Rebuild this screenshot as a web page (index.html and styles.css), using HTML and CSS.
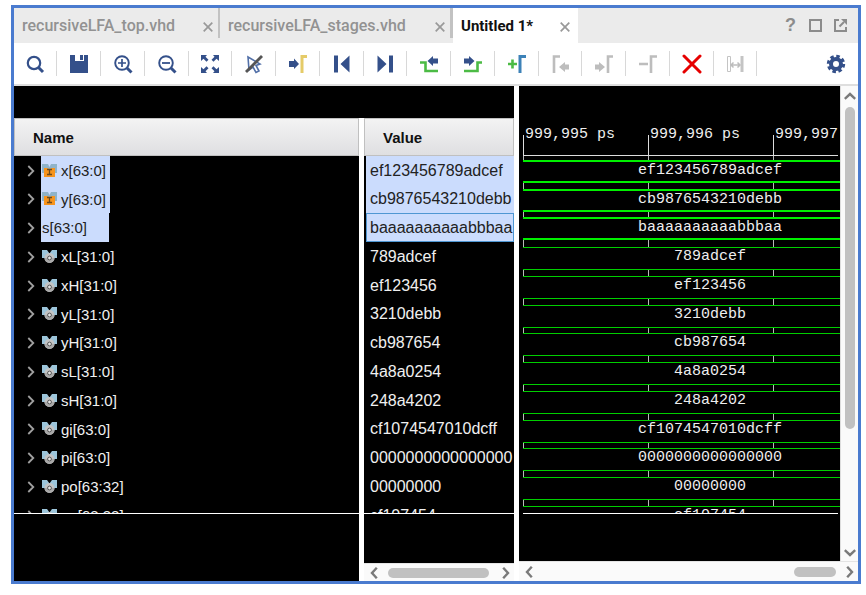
FILE: index.html
```html
<!DOCTYPE html>
<html lang="en">
<head>
<meta charset="utf-8">
<title>Waveform viewer</title>
<link rel="stylesheet" href="styles.css">
</head>
<body>
<svg class="defs" aria-hidden="true">
  <symbol id="close" viewBox="0 0 10 10"><path d="M.7.7l8.6 8.6M9.300.7L.7 9.300" stroke="currentColor" stroke-width="1.700" fill="none"/></symbol>
  <symbol id="chevron" viewBox="0 0 8 12"><path d="M1.300 1l5 5-5 5" stroke="currentColor" stroke-width="1.800" fill="none"/></symbol>
  <symbol id="arrow" viewBox="0 0 8 12"><path d="M1.200.8l4.800 5.200-4.800 5.200" stroke="currentColor" stroke-width="2.400" fill="none"/></symbol>
  <symbol id="input" viewBox="0 0 15 14"><path d="M0 0h6l1.500 3L9 0h6v9H0z" fill="#8fb3c9"/><path d="M2 4h3l2 1h1l2-1h3v9H2z" fill="#f7941d"/><path d="M5 5.500h5M5 10.500h5M7.500 5.500v5" stroke="#6b4a1c" stroke-width="1.300"/></symbol>
  <symbol id="bus" viewBox="0 0 15 14"><path d="M0 0h5l2.500 3.500L10 0h5v8H0z" fill="#9cc5da"/><circle cx="7.500" cy="8" r="5" fill="#c4c4c4"/><path d="M2.500 8a5 5 0 0 0 10 0" fill="#a9a9a9"/><circle cx="7.500" cy="8" r="1.900" fill="#e6e6e6" stroke="#555"/></symbol>
</svg>
<main class="window">
  <header class="tabbar">
    <nav class="tabs">
      <div class="tab tab-top"><a href="#">recursiveLFA_top.vhd</a><button aria-label="Close"><svg width="10" height="10"><use href="#close"/></svg></button></div>
      <div class="tab tab-stages"><a href="#">recursiveLFA_stages.vhd</a><button aria-label="Close"><svg width="10" height="10"><use href="#close"/></svg></button></div>
      <div class="tab tab-active"><a href="#">Untitled 1*</a><button aria-label="Close"><svg width="10" height="10"><use href="#close"/></svg></button></div>
    </nav>
    <div class="window-actions">
      <button aria-label="Help" class="help">?</button>
      <button aria-label="Maximize"><svg width="13" height="13" viewBox="0 0 13 13"><rect x="1" y="1" width="11" height="11" fill="none" stroke="#8c8c8c" stroke-width="2"/></svg></button>
      <button aria-label="Float"><svg width="13" height="13" viewBox="0 0 13 13"><path d="M5 1H1v11h11V8" fill="none" stroke="#8c8c8c" stroke-width="2"/><path d="M5.500 7.500L10 3" stroke="#8c8c8c" stroke-width="2"/><path d="M7 0h6v6z" fill="#8c8c8c"/></svg></button>
    </div>
  </header>

  <div class="toolbar">
    <div class="tools">
      <button aria-label="Find"><svg viewBox="0 0 20 20"><circle cx="9" cy="9" r="6.200" fill="none" stroke="#34508a" stroke-width="2.200"/><path d="M13.500 13.500l4.500 4.500" stroke="#34508a" stroke-width="3"/></svg></button>
      <button aria-label="Save"><svg viewBox="0 0 20 20"><path d="M1 1h5v6h9V1h4v18H1z" fill="#34508a"/><path d="M11 1h3v5h-3z" fill="#34508a"/></svg></button>
      <button aria-label="Zoom in"><svg viewBox="0 0 20 20"><circle cx="9" cy="9" r="6.800" fill="none" stroke="#34508a" stroke-width="1.900"/><path d="M5 9h8M9 5v8" stroke="#34508a" stroke-width="1.700"/><path d="M14 14l4.500 4.500" stroke="#34508a" stroke-width="3"/></svg></button>
      <button aria-label="Zoom out"><svg viewBox="0 0 20 20"><circle cx="9" cy="9" r="6.800" fill="none" stroke="#34508a" stroke-width="1.900"/><path d="M5 9h8" stroke="#34508a" stroke-width="1.800"/><path d="M14 14l4.500 4.500" stroke="#34508a" stroke-width="3"/></svg></button>
      <button aria-label="Zoom fit"><svg viewBox="0 0 20 20"><path d="M1 1h6L5.500 2.700l3 3-2 2-3-3L1 7zM19 1v6l-2.500-2.300-3 3-2-2 3-3L13 1zM1 19v-6l2.500 2.300 3-3 2 2-3 3L7 19zM19 19h-6l1.500-1.700-3-3 2-2 3 3L19 13z" fill="#34508a"/></svg></button>
      <button aria-label="Zoom to cursor"><svg viewBox="0 0 20 20"><path d="M4 3l12 7-4 1.500 3 5.500-3 1.500-3-5.500-4 3z" fill="#fff" stroke="#5270a8" stroke-width="1.600"/><path d="M2 18L18 2" stroke="#555" stroke-width="2.800"/></svg></button>
      <button aria-label="Go to cursor"><svg viewBox="0 0 20 20"><path d="M1 7h5V4.500l5 5.500-5 5V13H1z" fill="#34508a"/><path d="M19 2.500h-5V19" fill="none" stroke="#e5cb68" stroke-width="3"/></svg></button>
      <button aria-label="Go to start"><svg viewBox="0 0 20 20"><path d="M2 1.500h4v17H2zM17.500 1.500v17L8.500 10z" fill="#34508a"/></svg></button>
      <button aria-label="Go to end"><svg viewBox="0 0 20 20"><path d="M14 1.500h4v17h-4zM2.500 1.500v17l9-8.500z" fill="#34508a"/></svg></button>
      <button aria-label="Previous transition"><svg viewBox="0 0 20 20"><path d="M1 8.500h5.500v8.500H19" fill="none" stroke="#4cbb45" stroke-width="2.600"/><path d="M19 4.500h-5V2L8.500 7l5.500 5V9.500h5z" fill="#34508a"/></svg></button>
      <button aria-label="Next transition"><svg viewBox="0 0 20 20"><path d="M19 8.500h-4.500v8.500H1" fill="none" stroke="#4cbb45" stroke-width="2.600"/><path d="M1 4.500h5V2l5.500 5L6 12V9.500H1z" fill="#34508a"/></svg></button>
      <button aria-label="Add marker"><svg viewBox="0 0 20 20"><path d="M1 10h9M5.500 5.500v9" stroke="#4cbb45" stroke-width="2.600"/><path d="M19 2.500h-6V19" fill="none" stroke="#3d82b8" stroke-width="3"/></svg></button>
      <button aria-label="Previous marker" disabled><svg viewBox="0 0 20 20"><path d="M10 2.500H4V19" fill="none" stroke="#bdbdbd" stroke-width="2.600"/><path d="M19 10.500h-4V8l-6 5 6 5v-2.500h4z" fill="#bdbdbd"/></svg></button>
      <button aria-label="Next marker" disabled><svg viewBox="0 0 20 20"><path d="M19 2.500h-5V19" fill="none" stroke="#bdbdbd" stroke-width="2.600"/><path d="M1 10.500h4V8l6 5-6 5v-2.500H1z" fill="#bdbdbd"/></svg></button>
      <button aria-label="Delete marker" disabled><svg viewBox="0 0 20 20"><path d="M1 10h9M19 2.500h-6V19" fill="none" stroke="#bdbdbd" stroke-width="2.600"/></svg></button>
      <button aria-label="Delete all"><svg viewBox="0 0 20 20"><path d="M2 2l16 16M18 2L2 18" stroke="#e60000" stroke-width="3" stroke-linecap="round"/></svg></button>
      <button aria-label="Swap cursors" disabled><svg viewBox="0 0 20 20"><path d="M2.500 2.500h3v15h-3z" fill="none" stroke="#c4c4c4"/><path d="M15.500 2h3v16h-3z" fill="#c4c4c4"/><path d="M6 11h9M8.500 8.500L6 11l2.500 2.500M12.500 8.500L15 11l-2.500 2.500" fill="none" stroke="#bdbdbd" stroke-width="1.500"/></svg></button>
    </div>
    <button class="settings" aria-label="Settings"><svg viewBox="0 0 20 20"><circle cx="10" cy="10" r="7.700" fill="none" stroke="#34508a" stroke-width="3" stroke-dasharray="3.500 2.550"/><circle cx="10" cy="10" r="5" fill="none" stroke="#34508a" stroke-width="4"/></svg></button>
  </div>

  <div class="workspace">
    <section class="signals">
      <div class="strip"></div>
      <div class="columns">
        <div class="pane">
          <div class="clip">
            <table>
              <thead><tr><th scope="col">Name</th></tr></thead>
              <tbody class="names">
                <tr><td><div class="name"><button aria-label="Expand"><svg width="8" height="12"><use href="#chevron"/></svg></button><span class="label picked"><svg width="15" height="14"><use href="#input"/></svg>x[63:0]</span></div></td></tr>
                <tr><td><div class="name"><button aria-label="Expand"><svg width="8" height="12"><use href="#chevron"/></svg></button><span class="label picked"><svg width="15" height="14"><use href="#input"/></svg>y[63:0]</span></div></td></tr>
                <tr><td><div class="name"><button aria-label="Expand"><svg width="8" height="12"><use href="#chevron"/></svg></button><span class="label picked plain">s[63:0]</span></div></td></tr>
                <tr><td><div class="name"><button aria-label="Expand"><svg width="8" height="12"><use href="#chevron"/></svg></button><span class="label"><svg width="15" height="14"><use href="#bus"/></svg>xL[31:0]</span></div></td></tr>
                <tr><td><div class="name"><button aria-label="Expand"><svg width="8" height="12"><use href="#chevron"/></svg></button><span class="label"><svg width="15" height="14"><use href="#bus"/></svg>xH[31:0]</span></div></td></tr>
                <tr><td><div class="name"><button aria-label="Expand"><svg width="8" height="12"><use href="#chevron"/></svg></button><span class="label"><svg width="15" height="14"><use href="#bus"/></svg>yL[31:0]</span></div></td></tr>
                <tr><td><div class="name"><button aria-label="Expand"><svg width="8" height="12"><use href="#chevron"/></svg></button><span class="label"><svg width="15" height="14"><use href="#bus"/></svg>yH[31:0]</span></div></td></tr>
                <tr><td><div class="name"><button aria-label="Expand"><svg width="8" height="12"><use href="#chevron"/></svg></button><span class="label"><svg width="15" height="14"><use href="#bus"/></svg>sL[31:0]</span></div></td></tr>
                <tr><td><div class="name"><button aria-label="Expand"><svg width="8" height="12"><use href="#chevron"/></svg></button><span class="label"><svg width="15" height="14"><use href="#bus"/></svg>sH[31:0]</span></div></td></tr>
                <tr><td><div class="name"><button aria-label="Expand"><svg width="8" height="12"><use href="#chevron"/></svg></button><span class="label"><svg width="15" height="14"><use href="#bus"/></svg>gi[63:0]</span></div></td></tr>
                <tr><td><div class="name"><button aria-label="Expand"><svg width="8" height="12"><use href="#chevron"/></svg></button><span class="label"><svg width="15" height="14"><use href="#bus"/></svg>pi[63:0]</span></div></td></tr>
                <tr><td><div class="name"><button aria-label="Expand"><svg width="8" height="12"><use href="#chevron"/></svg></button><span class="label"><svg width="15" height="14"><use href="#bus"/></svg>po[63:32]</span></div></td></tr>
                <tr><td><div class="name"><button aria-label="Expand"><svg width="8" height="12"><use href="#chevron"/></svg></button><span class="label"><svg width="15" height="14"><use href="#bus"/></svg>go[63:32]</span></div></td></tr>
              </tbody>
            </table>
          </div>
          <div class="foot"></div>
        </div>
        <div class="pane">
          <div class="clip">
            <table>
              <thead><tr><th scope="col">Value</th></tr></thead>
              <tbody class="values">
                <tr><td><div class="value picked">ef123456789adcef</div></td></tr>
                <tr><td><div class="value picked">cb9876543210debb</div></td></tr>
                <tr><td><div class="value picked focused">baaaaaaaaaabbbaa</div></td></tr>
                <tr><td><div class="value">789adcef</div></td></tr>
                <tr><td><div class="value">ef123456</div></td></tr>
                <tr><td><div class="value">3210debb</div></td></tr>
                <tr><td><div class="value">cb987654</div></td></tr>
                <tr><td><div class="value">4a8a0254</div></td></tr>
                <tr><td><div class="value">248a4202</div></td></tr>
                <tr><td><div class="value">cf1074547010dcff</div></td></tr>
                <tr><td><div class="value">0000000000000000</div></td></tr>
                <tr><td><div class="value">00000000</div></td></tr>
                <tr><td><div class="value">cf107454</div></td></tr>
              </tbody>
            </table>
          </div>
          <div class="foot">
            <div class="hscroll value-scroll"><button class="back" aria-label="Scroll left"><svg width="8" height="12"><use href="#arrow"/></svg></button><span class="thumb"></span><button aria-label="Scroll right"><svg width="8" height="12"><use href="#arrow"/></svg></button></div>
          </div>
        </div>
      </div>
    </section>

    <section class="waves">
      <div class="wave-main">
        <div class="wave-view">
          <div class="ruler"><span>999,995 ps</span><span>999,996 ps</span><span>999,997</span></div>
          <div class="wave-list">
            <div class="wave strong"><div class="body">ef123456789adcef</div></div>
            <div class="wave strong"><div class="body">cb9876543210debb</div></div>
            <div class="wave strong"><div class="body">baaaaaaaaaabbbaa</div></div>
            <div class="wave"><div class="body">789adcef</div></div>
            <div class="wave"><div class="body">ef123456</div></div>
            <div class="wave"><div class="body">3210debb</div></div>
            <div class="wave"><div class="body">cb987654</div></div>
            <div class="wave"><div class="body">4a8a0254</div></div>
            <div class="wave"><div class="body">248a4202</div></div>
            <div class="wave"><div class="body">cf1074547010dcff</div></div>
            <div class="wave"><div class="body">0000000000000000</div></div>
            <div class="wave"><div class="body">00000000</div></div>
            <div class="wave"><div class="body">cf107454</div></div>
          </div>
          <div class="wave-foot"></div>
        </div>
        <div class="vscroll"><button class="up" aria-label="Scroll up"><svg width="8" height="12"><use href="#arrow"/></svg></button><span class="thumb"></span><button class="down" aria-label="Scroll down"><svg width="8" height="12"><use href="#arrow"/></svg></button></div>
      </div>
      <div class="hscroll wave-scroll"><button class="back" aria-label="Scroll left"><svg width="8" height="12"><use href="#arrow"/></svg></button><span class="thumb"></span><button aria-label="Scroll right"><svg width="8" height="12"><use href="#arrow"/></svg></button></div>
    </section>
  </div>
</main>
</body>
</html>
```
FILE: styles.css
```css
* { box-sizing: border-box; }

body {
  margin: 0;
  height: 100vh;
  padding: 5px 5px 11px 11px;
  background: #fff;
  font: 15px "Liberation Sans", Arial, sans-serif;
  color: #000;
}

.defs { display: none; }

button {
  display: flex;
  align-items: center;
  justify-content: center;
  margin: 0;
  padding: 0;
  border: 0;
  background: none;
  color: inherit;
}

.window {
  display: flex;
  flex-direction: column;
  height: 100%;
  border: 3px solid #4a7bcf;
}

/* Tabs */
.tabbar {
  display: flex;
  flex: none;
  justify-content: space-between;
  height: 35px;
  background: #ebebeb;
}

.tabs { display: flex; }

.tab {
  display: flex;
  align-items: center;
  justify-content: space-between;
  height: 30px;
  padding-left: 8px;
  border-right: 2px solid #c2c2c2;
  font: 500 16px Roboto, sans-serif;
  color: #929292;
}

.tab a {
  padding-top: 5px;
  color: inherit;
  text-decoration: none;
}

.tab button {
  width: 20px;
  height: 20px;
  margin-top: 8px;
  color: #999;
}

.tab-top { width: 206px; }

.tab-stages {
  width: 233px;
  border-right-width: 3px;
}

.tab-active {
  width: 125px;
  height: 35px;
  padding-right: 3px;
  padding-bottom: 5px;
  border-right: 0;
  background: #fff;
  font-weight: 700;
  font-size: 15px;
  color: #111;
}

.window-actions {
  display: flex;
  padding-right: 5px;
}

.window-actions button { width: 25px; }

.window-actions .help {
  font: 700 18px "Liberation Sans", Arial, sans-serif;
  color: #8c8c8c;
}

/* Toolbar */
.toolbar {
  display: flex;
  flex: none;
  align-items: center;
  justify-content: space-between;
  height: 43px;
  border-bottom: 2px solid #dedede;
}

.tools { display: flex; }

.tools button {
  width: 44px;
  height: 25px;
  border-right: 1px solid #d8d8d8;
}

.tools button:nth-child(4n+1) { width: 43px; }

.toolbar svg {
  width: 20px;
  height: 20px;
}

.settings { width: 44px; }

/* Workspace */
.workspace {
  display: grid;
  flex: 1;
  grid-template-columns: 500px minmax(0, 1fr);
  gap: 5px;
  min-height: 0;
}

.signals {
  display: flex;
  flex-direction: column;
  min-height: 0;
}

.strip {
  flex: none;
  height: 32px;
  background: #000;
}

.columns {
  display: grid;
  flex: 1;
  grid-template-columns: minmax(0, 1fr) 150px;
  grid-template-rows: minmax(0, 1fr);
  gap: 5px;
  min-height: 0;
}

.pane {
  display: flex;
  flex-direction: column;
  min-height: 0;
  background: #000;
  color: #f0f0f0;
}

.clip {
  flex: 1;
  min-height: 0;
  overflow: hidden;
}

table {
  width: 100%;
  border-spacing: 0;
}

th {
  height: 38px;
  padding: 0 18px;
  border: 1px solid #c0c0c0;
  background: linear-gradient(#f3f3f3, #dfdfe1);
  color: #111;
  text-align: left;
}

td { padding: 0; }

.name,
.value,
.wave { height: 29px; }

tr:nth-child(4n+2) .name,
tr:nth-child(4n+2) .value,
.wave:nth-child(4n+2) { height: 28px; }

.name {
  display: flex;
  align-items: stretch;
}

.name button {
  width: 27px;
  padding-left: 6px;
  color: #a0a0a0;
}

.label {
  display: flex;
  align-items: center;
  gap: 4px;
  padding: 0 4px 0 1px;
}

.label.plain { padding-right: 22px; }

.picked {
  background: #cbdcfd;
  color: #222;
}

.value {
  display: flex;
  align-items: center;
  margin-left: 2px;
  padding-left: 4px;
  font-size: 16px;
}

.focused {
  padding-left: 3px;
  border: 1px solid #4f97d3;
}

.foot {
  display: flex;
  flex: none;
  flex-direction: column;
  justify-content: flex-end;
  height: 68px;
  border-top: 1px solid #fff;
}

/* Waveforms */
.waves {
  display: flex;
  flex-direction: column;
  min-height: 0;
}

.wave-main {
  display: flex;
  flex: 1;
  min-height: 0;
}

.wave-view {
  display: flex;
  flex: 1;
  flex-direction: column;
  min-width: 0;
  background: #000;
  color: #eee;
  font: 15px "Liberation Mono", "Courier New", monospace;
}

.ruler {
  display: flex;
  flex: none;
  align-items: flex-end;
  height: 70px;
  margin: 0 2px 0 4px;
  border-bottom: 1px solid #ddd;
  overflow: hidden;
}

.ruler span {
  flex: none;
  width: 125px;
  height: 28px;
  padding-left: 2px;
  background: linear-gradient(#ddd, #ddd) left bottom / 1px 20px no-repeat;
  line-height: 15px;
}

.wave-list {
  flex: 1;
  min-height: 0;
  margin-left: 4px;
  overflow: hidden;
  background: repeating-linear-gradient(to right, #bbb 0 1px, #000 1px 125px);
}

.wave { padding-top: 5px; }

.wave.strong { padding-top: 4px; }

.body {
  height: 23px;
  padding-left: 57px;
  border: solid #00cf00;
  border-width: 1px 0;
  background: #000;
  line-height: 17px;
  text-align: center;
}

.strong .body {
  border-color: #00f000;
  border-width: 2px 0;
}

.wave-foot {
  flex: none;
  height: 48px;
  margin: 0 2px 0 4px;
  border-top: 1px solid #fff;
}

/* Scrollbars */
.hscroll,
.vscroll {
  display: flex;
  flex: none;
  align-items: center;
  background: #fafafa;
  color: #7a7a7a;
}

.hscroll {
  height: 18px;
  border-top: 1px solid #e4e4e4;
}

.wave-scroll { height: 20px; }

.hscroll button {
  width: 16px;
  height: 16px;
}

.thumb {
  border-radius: 5px;
  background: #c1c1c1;
}

.hscroll .thumb { height: 10px; }

.value-scroll {
  justify-content: space-between;
  padding: 0 0 0 2px;
}

.value-scroll .thumb {
  flex: 1;
  margin: 0 9px 0 6px;
}

.wave-scroll { padding: 0 0 0 2px; }

.wave-scroll .thumb {
  width: 42px;
  margin: 0 6px 0 auto;
}

.back svg { transform: rotate(180deg); }

.vscroll {
  flex-direction: column;
  width: 18px;
  padding: 2px 0 0 1px;
  border-left: 1px solid #ddd;
}

.vscroll button {
  width: 16px;
  height: 16px;
}

.vscroll .thumb {
  width: 10px;
  height: 68%;
  margin-top: 3px;
}

.vscroll .down { margin-top: auto; }

.up svg { transform: rotate(-90deg); }

.down svg { transform: rotate(90deg); }
```
